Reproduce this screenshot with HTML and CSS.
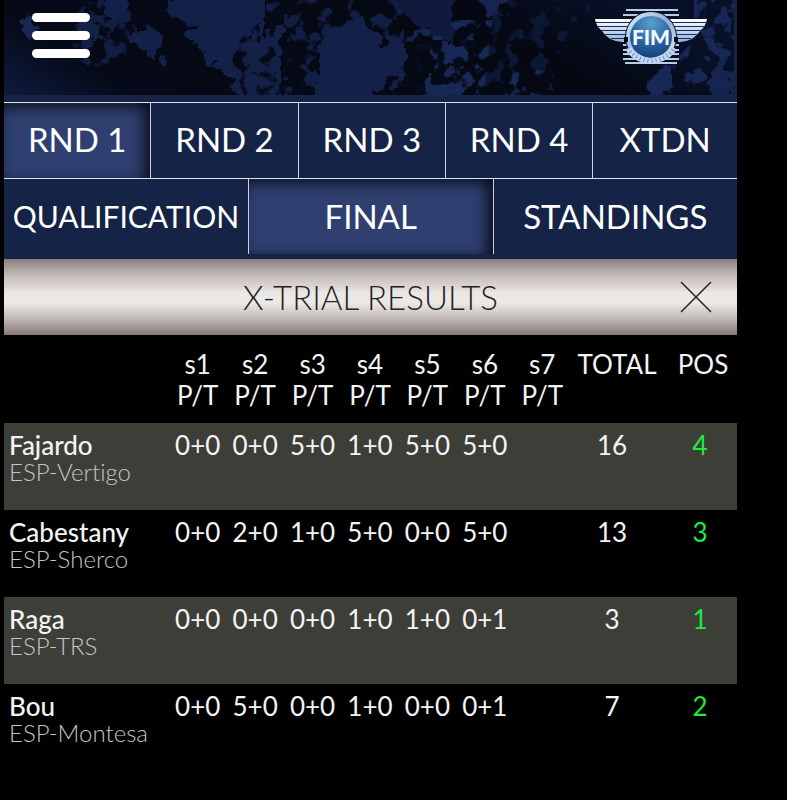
FILE: index.html
```
<!DOCTYPE html>
<html lang="en">
<head>
  <meta charset="UTF-8" />
  <meta name="viewport" content="width=device-width, initial-scale=1.0"/>
  <title>X-Trial Results</title>
  <link rel="stylesheet" href="styles.css">
</head>
<body>
  <div class="app">

    <header class="topbar">
      <svg class="texture" viewBox="0 0 730 95" preserveAspectRatio="xMidYMid slice" aria-hidden="true">
        <defs>
          <linearGradient id="base" x1="0" x2="1" y1="1" y2="0.8">
            <stop offset="0" stop-color="#0e1b3c"/>
            <stop offset="0.17" stop-color="#060a18"/>
            <stop offset="0.6" stop-color="#050914"/>
            <stop offset="0.8" stop-color="#050812"/>
            <stop offset="1" stop-color="#071027"/>
          </linearGradient>
          <filter id="rough" x="-5%" y="-5%" width="110%" height="110%" color-interpolation-filters="sRGB">
            <feTurbulence type="fractalNoise" baseFrequency="0.07" numOctaves="3" seed="4"/>
            <feDisplacementMap in="SourceGraphic" scale="24" xChannelSelector="R" yChannelSelector="G"/>
          </filter>
          <filter id="specks" x="0" y="0" width="100%" height="100%" color-interpolation-filters="sRGB">
            <feTurbulence type="fractalNoise" baseFrequency="0.07 0.07" numOctaves="3" seed="7" result="noise"/>
            <feColorMatrix in="noise" values="0 0 0 0 0  0 0 0 0 0  0 0 0 0 0  0 0 0 9 -4.7" result="mask"/>
            <feComposite in="SourceGraphic" in2="mask" operator="in"/>
          </filter>
        </defs>
        <rect width="730" height="95" fill="url(#base)"/>
        <g filter="url(#specks)">
          <path fill="#111e42" d="M60 0H130L120 70H90L60 50Z"/>
          <path fill="#121f44" d="M262 0H400V95H262Z"/>
          <path fill="#172856" d="M410 20H490V95H410Z"/>
          <path fill="#0c1733" d="M490 0H590L540 95H480Z"/>
          <path fill="#172856" d="M510 66L545 72 550 95H500ZM690 0H730V95H640L690 40Z"/>
        </g>
        <g filter="url(#rough)" fill="#132148">
          <path d="M160 12L176 -12H262V42L278 20V110H238L222 74 196 52 184 40 190 28Z"/>
          <path d="M318 36L332 22 360 20 366 34 378 44 394 40 410 48 402 70 378 84 366 110H302L318 70Z"/>
          <path d="M372 -12H452L448 40 424 32Z" fill="#0f1a3c"/>
          <path d="M426 48L446 40 462 52 452 66 432 62Z" fill="#172856"/>
          <path d="M16 20L26 14 32 28 24 36Z" fill="#172856"/>
          <path d="M76 20L90 14 96 40 84 52 74 40Z"/>
          <path d="M120 30L152 28 160 42 156 64 146 62 144 48 122 42Z"/>
          <path d="M100 -8H124L114 22 102 18Z"/>
          <path d="M424 76L450 68 470 80 458 104H418Z" fill="#172856"/>
          <path d="M468 -8H504L496 16 478 14Z" fill="#152550"/>
          <path d="M704 72L722 60 732 84 724 104H706Z" fill="#152550"/>
          <path d="M642 82L658 66 668 80 650 104Z" fill="#172856"/>
        </g>
        <g filter="url(#specks)" fill="#060a17">
          <path d="M225 50L280 0V95H240ZM410 40H470V95H390Z"/>
        </g>
      </svg>

      <button class="menu" aria-label="Menu">
        <span></span>
        <span></span>
        <span></span>
      </button>

      <a class="logo" href="#" aria-label="FIM home">
        <svg viewBox="0 0 114 56" width="114" height="56">
          <defs>
            <linearGradient id="wing" x1="0" x2="0" y1="0" y2="1">
              <stop offset="0" stop-color="#ffffff"/>
              <stop offset="0.5" stop-color="#c4d6f0"/>
              <stop offset="1" stop-color="#8fb0dc"/>
            </linearGradient>
            <linearGradient id="ring" x1="0" x2="1" y1="0" y2="1">
              <stop offset="0" stop-color="#dfe9f7"/>
              <stop offset="0.5" stop-color="#93add6"/>
              <stop offset="1" stop-color="#dce9fb"/>
            </linearGradient>
            <radialGradient id="disc" cx="0.5" cy="0.2" r="0.8">
              <stop offset="0" stop-color="#5b9ecf"/>
              <stop offset="0.55" stop-color="#2a66a4"/>
              <stop offset="1" stop-color="#153c75"/>
            </radialGradient>
          </defs>
          <!-- bars behind the badge -->
          <path stroke="#b9cbe6" stroke-width="2" d="M32 1H84M29 6H85M29 36H85M29 41H85M29 45H85M29 50H85M31 54H83"/>
          <!-- wings -->
          <path fill="url(#wing)" d="M1 10H38V33H28Q14 32 8 22Q2 17 1 10ZM113 10H76V33H86Q100 32 106 22Q112 17 113 10Z"/>
          <path stroke="#1b2c50" stroke-width="1" d="M2 13.500H36M4 17.500H34M7 21.500H33M11 25.500H32M17 29.500H32M112 13.500H78M110 17.500H80M107 21.500H81M103 25.500H82M97 29.500H82"/>
          <circle cx="57" cy="28" r="26" fill="#0b1226"/>
          <circle cx="57" cy="28" r="23" fill="url(#disc)" stroke="url(#ring)" stroke-width="4"/>
          <path fill="none" stroke="#05080f" stroke-width="4" d="M32 28V33M82 28V33"/>
          <!-- laurel -->
          <path fill="none" stroke="#c3d7f3" stroke-width="6" d="M34 39Q40 50 56 52Q74 50 80 39"/>
          <path fill="none" stroke="#6f8fc0" stroke-width="4" stroke-dasharray="1 3" d="M34 39Q40 50 56 52Q74 50 80 39"/>
          <text x="57" y="36" text-anchor="middle" class="logo-text">FIM</text>
        </svg>
      </a>
    </header>

    <nav class="tabs rounds">
      <button class="active">RND 1</button>
      <button>RND 2</button>
      <button>RND 3</button>
      <button>RND 4</button>
      <button>XTDN</button>
    </nav>

    <nav class="tabs stages">
      <button class="small">QUALIFICATION</button>
      <button class="active">FINAL</button>
      <button>STANDINGS</button>
    </nav>

    <div class="title">
      <h1>X-TRIAL RESULTS</h1>
      <button class="close" aria-label="Close">
        <svg viewBox="0 0 32 32" width="32" height="32">
          <path d="M1 1L31 31M31 1L1 31" fill="none" stroke="#222" stroke-width="1.500"/>
        </svg>
      </button>
    </div>

    <table class="results">
      <thead>
        <tr>
          <th class="rider" aria-label="Rider"></th>
          <th>s1<br>P/T</th>
          <th>s2<br>P/T</th>
          <th>s3<br>P/T</th>
          <th>s4<br>P/T</th>
          <th>s5<br>P/T</th>
          <th>s6<br>P/T</th>
          <th>s7<br>P/T</th>
          <th class="total">TOTAL</th>
          <th class="pos">POS</th>
        </tr>
      </thead>
      <tbody>
        <tr>
          <td class="rider"><strong>Fajardo</strong><small>ESP-Vertigo</small></td>
          <td>0+0</td><td>0+0</td><td>5+0</td><td>1+0</td><td>5+0</td><td>5+0</td><td></td>
          <td class="total">16</td>
          <td class="pos">4</td>
        </tr>
        <tr>
          <td class="rider"><strong>Cabestany</strong><small>ESP-Sherco</small></td>
          <td>0+0</td><td>2+0</td><td>1+0</td><td>5+0</td><td>0+0</td><td>5+0</td><td></td>
          <td class="total">13</td>
          <td class="pos">3</td>
        </tr>
        <tr>
          <td class="rider"><strong>Raga</strong><small>ESP-TRS</small></td>
          <td>0+0</td><td>0+0</td><td>0+0</td><td>1+0</td><td>1+0</td><td>0+1</td><td></td>
          <td class="total">3</td>
          <td class="pos">1</td>
        </tr>
        <tr>
          <td class="rider"><strong>Bou</strong><small>ESP-Montesa</small></td>
          <td>0+0</td><td>5+0</td><td>0+0</td><td>1+0</td><td>0+0</td><td>0+1</td><td></td>
          <td class="total">7</td>
          <td class="pos">2</td>
        </tr>
      </tbody>
    </table>

  </div>
</body>
</html>
```
FILE: styles.css
```
* {
  box-sizing: border-box;
}
body {
  font-family: Lato, sans-serif;
  font-variant-ligatures: none;
  margin: 0;
  background: #000;
  color: #f4f4f4;
}
button {
  font-family: inherit;
  color: inherit;
  background: none;
  border: none;
  padding: 0;
  cursor: pointer;
}
.app {
  margin: 0 50px 0 4px;
}

/* header */
.topbar {
  position: relative;
  display: flex;
  justify-content: space-between;
  align-items: flex-start;
  height: 102px;
  padding: 9px 26px 0 28px;
  background: #142346;
  border-right: 3px solid #142346;
  overflow: hidden;
}
.texture {
  position: absolute;
  top: 0;
  left: 0;
  width: 100%;
  height: 95px;
}
.menu {
  position: relative;
  display: flex;
  flex-direction: column;
  gap: 9px;
  width: 58px;
  padding-top: 4px;
}
.menu span {
  height: 9px;
  border-radius: 5px;
  background: #fff;
}
.logo {
  position: relative;
  height: 56px;
}
.logo-text {
  font: 900 21px Lato, sans-serif;
  fill: #f3f8ff;
}

/* tabs */
.tabs {
  display: grid;
  background: #142346;
  border-top: 1px solid #dfe3ec;
}
.rounds {
  grid-template-columns: repeat(4, 20.1%) 1fr;
}
.stages {
  grid-template-columns: repeat(2, 33.4%) 1fr;
  padding-bottom: 5px;
}
.tabs button {
  height: 75px;
  padding-bottom: 4px;
  border-right: 1px solid #ccd0da;
  font-size: 33px;
  color: #fff;
}
.stages button {
  padding-bottom: 2px;
}
.tabs button:last-child {
  border-right: none;
}
.tabs .small {
  font-size: 30px;
}
.tabs .active {
  background: #2f4070;
  box-shadow: inset -6px 4px 14px #0a0f1e;
}

/* title bar */
.title {
  display: grid;
  grid-template-columns: 1fr auto 1fr;
  align-items: center;
  height: 76px;
  padding: 0 25px;
  background: linear-gradient(#8b7f7d, #c4bbb8 22%, #ebe8e5 45%, #ebe8e5 58%, #c4bbb8 78%, #857876);
  color: #222;
}
.title h1 {
  grid-column: 2;
  margin: 0;
  font-size: 33px;
  font-weight: 300;
}
.close {
  justify-self: end;
  display: flex;
}

/* results */
.results {
  width: 100%;
  table-layout: fixed;
  border-collapse: collapse;
  font-size: 26px;
  line-height: 31px;
}
.results th,
.results td {
  padding: 7px 0 0;
  font-weight: 400;
  text-align: center;
  vertical-align: top;
  white-space: nowrap;
}
.results th {
  padding: 14px 0 12px;
}
.results tbody tr {
  height: 87px;
}
.results tbody tr:nth-child(odd) {
  background: #3e3e39;
}
.results .rider {
  width: 165px;
  padding-left: 5px;
  text-align: left;
}
.results .total {
  width: 92px;
}
.results .pos {
  width: 74px;
}
.results th.pos {
  padding-left: 6px;
}
.results td.total {
  padding-right: 10px;
}
.results td.pos {
  color: #1aee3e;
}
.rider strong {
  display: block;
  font-weight: 500;
}
.rider small {
  display: block;
  font-size: 24px;
  font-weight: 300;
  line-height: 22px;
  color: #c4c4c4;
}
```
